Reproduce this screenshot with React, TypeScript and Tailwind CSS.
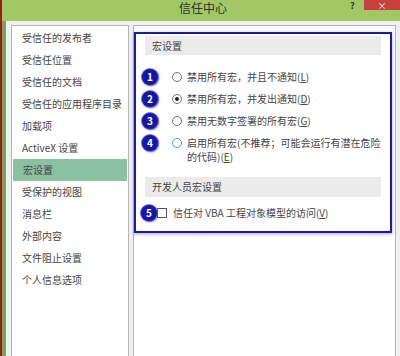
import type { ReactNode } from 'react'

const FONT = { fontFamily: '"Noto Sans CJK SC", "Noto Sans", sans-serif' }

const NAV = [
  '受信任的发布者',
  '受信任位置',
  '受信任的文档',
  '受信任的应用程序目录',
  '加载项',
  'ActiveX 设置',
  '宏设置',
  '受保护的视图',
  '消息栏',
  '外部内容',
  '文件阻止设置',
  '个人信息选项',
]

function Badge({ n }: { n: number }) {
  return (
    <div className="w-4 h-4 rounded-full bg-[#1616a6] ring-1 ring-[#6f6fd8] shadow-[1px_1px_2px_rgba(0,0,60,0.6)] flex items-center justify-center text-white text-[10px] font-bold leading-none shrink-0">
      {n}
    </div>
  )
}

function Radio({ checked, hover }: { checked?: boolean; hover?: boolean }) {
  return (
    <div
      className={
        'w-[10px] h-[10px] rounded-full border bg-white flex items-center justify-center shrink-0 ' +
        (hover ? 'border-[#5b8fd6]' : 'border-[#707070]')
      }
    >
      {checked && <div className="w-1 h-1 rounded-full bg-[#222]" />}
    </div>
  )
}

function Key({ k }: { k: string }) {
  return (
    <>
      (<span className="underline">{k}</span>)
    </>
  )
}

function Row({ n, checked, hover, children }: { n: number; checked?: boolean; hover?: boolean; children: ReactNode }) {
  return (
    <div className="flex items-start pl-[6px]">
      <Badge n={n} />
      <div className="ml-[14px] mt-[3px]">
        <Radio checked={checked} hover={hover} />
      </div>
      <div className="ml-[5px] leading-[14px] mt-[1px]">{children}</div>
    </div>
  )
}

export default function App() {
  return (
    <div className="w-[400px] h-[356px] overflow-hidden flex bg-[#f0f0f0] text-[#454545]" style={FONT}>
      <div className="w-[2px] bg-[#9b1b17] shrink-0" />
      <div className="flex-1 flex flex-col">
        <div className="h-[21px] bg-[#a2c866] flex items-start relative shrink-0">
          <div className="flex-1 text-center text-[12px] leading-[15px] text-[#333] pl-[4px]">信任中心</div>
          <div className="absolute left-[348px] top-0 text-[9px] leading-[12px] font-bold text-[#333]">?</div>
          <div className="absolute right-0 top-0 w-[36px] h-[10px] bg-[#c6413d] flex items-center justify-center text-white text-[9px] leading-[9px]">×</div>
        </div>
        <div className="flex-1 flex">
          <div className="w-[4px] bg-[#7c9f5a] shrink-0" />
          <div className="flex-1 flex pt-[4px] pl-[5px] pr-[4px]">
            <div className="w-[118px] bg-white border border-[#b4b4b4] border-b-0 pt-[1px] text-[10px]">
              {NAV.map(item => (
                <div
                  key={item}
                  className={
                    'h-[22px] leading-[22px] pl-[10px] ' + (item === '宏设置' ? 'bg-[#89c1a2] mx-[1px] pl-[9px]' : '')
                  }
                >
                  {item}
                </div>
              ))}
            </div>
            <div className="flex-1 ml-[4px] bg-white border border-[#b4b4b4] border-b-0 pt-[6px] pr-[3px]">
              <div className="border-2 border-[#1c1ca0] shadow-[0_1px_3px_rgba(90,60,200,0.5)] pb-[10px] text-[10px]">
                <div className="mx-[9px] mt-[2px] h-[19px] bg-[#ebebeb] pl-[7px] leading-[19px]">宏设置</div>
                <div className="flex flex-col gap-[6px] mt-[14px]">
                  <Row n={1}>
                    禁用所有宏，并且不通知<Key k="L" />
                  </Row>
                  <Row n={2} checked>
                    禁用所有宏，并发出通知<Key k="D" />
                  </Row>
                  <Row n={3}>
                    禁用无数字签署的所有宏<Key k="G" />
                  </Row>
                  <Row n={4} hover>
                    启用所有宏(不推荐；可能会运行有潜在危险
                    <br />
                    的代码)<Key k="E" />
                  </Row>
                </div>
                <div className="mx-[9px] mt-[13px] h-[20px] bg-[#ebebeb] pl-[7px] leading-[20px]">开发人员宏设置</div>
                <div className="flex items-center pl-[5px] mt-[8px]">
                  <Badge n={5} />
                  <div className="w-[10px] h-[10px] border border-[#555] bg-white shrink-0" />
                  <div className="ml-[6px] leading-[14px]">
                    信任对 VBA 工程对象模型的访问<Key k="V" />
                  </div>
                </div>
              </div>
            </div>
          </div>
        </div>
      </div>
    </div>
  )
}
